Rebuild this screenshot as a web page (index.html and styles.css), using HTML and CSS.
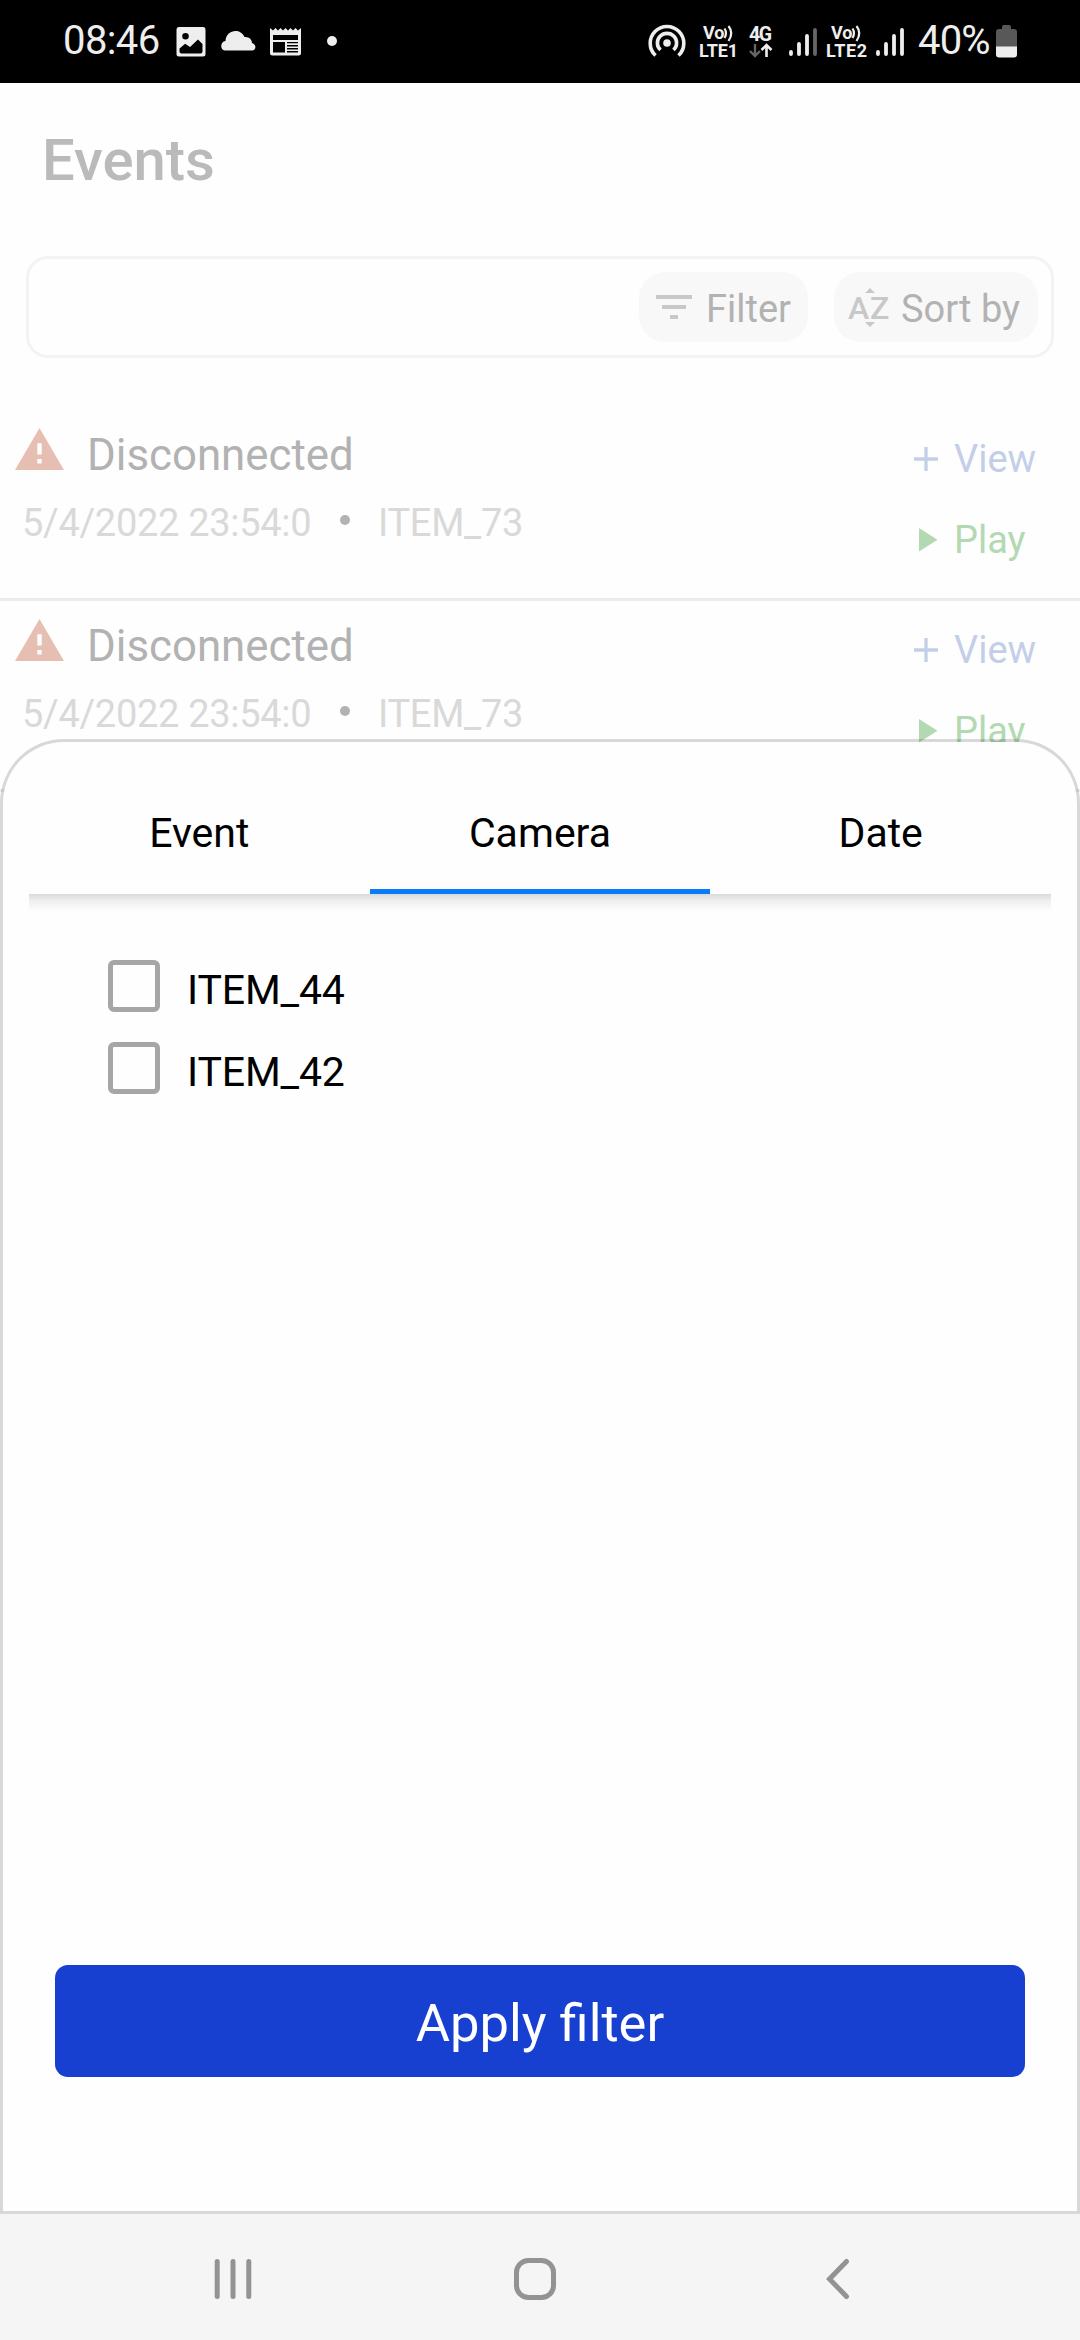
FILE: index.html
```
<!DOCTYPE html>
<html lang="en">
<head>
<meta charset="utf-8">
<title>Events</title>
<link rel="stylesheet" href="styles.css">
</head>
<body>
<div class="screen">
  <header class="status">
    <span class="clock">08:46</span>
    <svg class="s-image" width="30" height="30" viewBox="0 0 30 30"><path fill="#eee" fill-rule="evenodd" d="M3 0H27Q29.500 0 29.500 3V27Q29.500 29.500 27 29.500H3Q.5 29.500 .5 27V3Q.5 0 3 0ZM9.500 6A3.300 3.300 0 1 0 9.500 12.600A3.300 3.300 0 1 0 9.500 6ZM3.500 21.500L9.200 16.700L14 20L22 12.500L26.500 17V24.500Q26.500 26.500 24.500 26.500H5.500Q3.500 26.500 3.500 24.500Z"/></svg>
    <svg class="s-cloud" width="35" height="20" viewBox="0 0 35 20"><path fill="#eee" d="M5 19.500C-1.500 19.500-1 10.500 4.500 10C5-1 19-3.500 23.500 6C28 5.500 31 8.500 31 12C36 13.500 35 19.500 31 19.500Z"/></svg>
    <svg class="s-news" width="31" height="28" viewBox="0 0 31 28"><path fill="#eee" fill-rule="evenodd" d="M0 0L3 2.500L5.500 0L8 2.500L10.500 0L13 2.500L15.500 0L18 2.500L20.500 0L23 2.500L25.500 0L28 2.500L31 0V25Q31 27.500 28.500 27.500H2.500Q0 27.500 0 25ZM3 7V12H28V7ZM3 14V24.500H15V14ZM17 14V15.200H28V14ZM17 17V18.500H28V17ZM17 20V21.500H28V20ZM17 23V24.500H28V23Z"/></svg>
    <span class="s-dot"></span>
    <span class="spacer"></span>
    <svg class="s-hotspot" width="38" height="34" viewBox="0 0 38 34" fill="none" stroke="#eee" stroke-width="3.600"><circle cx="19" cy="19" r="3.800" fill="#eee" stroke="none"/><path d="M12.500 26A9.600 9.600 0 1 1 25.500 26"/><path d="M7.500 31.500A16.800 16.800 0 1 1 30.500 31.500"/></svg>
    <svg class="s-volte" width="42" height="42" viewBox="0 -6 42 42"><g fill="#eee" class="tiny"><text x="4" y="15">Vo</text><text x="0" y="33" textLength="39">LTE1</text></g><path d="M25.500 4.500Q28.500 9 25.500 14M29.500 2Q35 9 29.500 17" fill="none" stroke="#eee" stroke-width="2.200"/></svg>
    <svg class="s-4g" width="26" height="42" viewBox="0 -6 26 42"><text class="tiny net" x="1" y="16.500" fill="#eee" textLength="23">4G</text><path d="M7 20V32M2 27L7 32L12 27" fill="none" stroke="#666" stroke-width="2.400"/><path d="M18.500 33V21M13.500 26L18.500 21L23.500 26" fill="none" stroke="#eee" stroke-width="2.600"/></svg>
    <svg class="s-signal" width="28" height="30" viewBox="0 0 28 30" stroke="#eee" stroke-width="3.800" stroke-linecap="round"><path d="M2 25V27M10 17V27M18 9V27"/><path stroke="#666" d="M26 3V27"/></svg>
    <svg class="s-volte2" width="42" height="42" viewBox="0 -6 42 42"><g fill="#eee" class="tiny"><text x="5" y="15">Vo</text><text x="0" y="33" textLength="41">LTE2</text></g><path d="M26.500 4.500Q29.500 9 26.500 14M30.500 2Q36 9 30.500 17" fill="none" stroke="#eee" stroke-width="2.200"/></svg>
    <svg class="s-signal2" width="28" height="30" viewBox="0 0 28 30" stroke="#eee" stroke-width="3.800" stroke-linecap="round"><path d="M2 25V27M10 17V27M18 9V27M26 3V27"/></svg>
    <span class="percent">40%</span>
    <svg class="s-battery" width="21" height="33" viewBox="0 0 21 33"><path fill="#585858" d="M6 3V2Q6 0 8 0H13Q15 0 15 2V4H18Q21 4 21 7V22H0V7Q0 4 3 4H6Z"/><path fill="#eee" d="M0 21.500H21V29.500Q21 32.500 18 32.500H3Q0 32.500 0 29.500Z"/></svg>
  </header>

  <main class="content">
    <h1 class="title">Events</h1>
    <div class="toolbar">
      <button class="chip chip-filter">
        <svg width="36" height="24" viewBox="0 0 36 24" fill="#c8c8c8"><path d="M0 0H36V4H0ZM6 10H30V14H6ZM14 20H22V24H14Z"/></svg>
        <span>Filter</span>
      </button>
      <button class="chip chip-sort">
        <svg width="42" height="40" viewBox="0 0 42 40" fill="#c8c8c8"><path d="M17 6L22 1L27 6ZM17 35L22 40L27 35Z"/><text class="az" x="0" y="32">A</text><text class="az" x="22" y="32">Z</text></svg>
        <span>Sort by</span>
      </button>
    </div>
    <section class="events">
      <article class="event">
        <div class="info">
          <div class="line-name"><svg width="49" height="42" viewBox="0 0 49 42"><path fill="#e7beb2" fill-rule="evenodd" d="M24.500 0L49 42H0ZM22.300 15.300V26.500H26.700V15.300ZM22.300 31V35.500H26.700V31Z"/></svg><span>Disconnected</span></div>
          <div class="line-meta"><span class="date">5/4/2022 23:54:0</span><i class="bullet"></i><span class="source">ITEM_73</span></div>
        </div>
        <div class="actions">
          <a class="view"><svg width="24" height="24" viewBox="0 0 24 24"><path d="M12 0V24M0 12H24" stroke="#c3cfe8" stroke-width="3.300"/></svg><span>View</span></a>
          <a class="play"><svg width="24" height="24" viewBox="0 0 24 24"><path d="M5 0L23.500 11.800L5 23.500Z" fill="#b3d9b3"/></svg><span>Play</span></a>
        </div>
      </article>
      <article class="event">
        <div class="info">
          <div class="line-name"><svg width="49" height="42" viewBox="0 0 49 42"><path fill="#e7beb2" fill-rule="evenodd" d="M24.500 0L49 42H0ZM22.300 15.300V26.500H26.700V15.300ZM22.300 31V35.500H26.700V31Z"/></svg><span>Disconnected</span></div>
          <div class="line-meta"><span class="date">5/4/2022 23:54:0</span><i class="bullet"></i><span class="source">ITEM_73</span></div>
        </div>
        <div class="actions">
          <a class="view"><svg width="24" height="24" viewBox="0 0 24 24"><path d="M12 0V24M0 12H24" stroke="#c3cfe8" stroke-width="3.300"/></svg><span>View</span></a>
          <a class="play"><svg width="24" height="24" viewBox="0 0 24 24"><path d="M5 0L23.500 11.800L5 23.500Z" fill="#b3d9b3"/></svg><span>Play</span></a>
        </div>
      </article>
    </section>

    <section class="sheet">
      <nav class="tabs">
        <span class="tab">Event</span>
        <span class="tab active">Camera</span>
        <span class="tab">Date</span>
      </nav>
      <div class="tab-shadow"></div>
      <div class="options">
        <label class="option"><i class="box"></i><span>ITEM_44</span></label>
        <label class="option"><i class="box"></i><span>ITEM_42</span></label>
      </div>
      <button class="apply">Apply filter</button>
    </section>
  </main>

  <footer class="navbar">
    <svg width="38" height="42" viewBox="0 0 38 42" stroke="#939393" stroke-width="5" stroke-linecap="round"><path d="M3.200 3.500V38.500M19 3.500V38.500M34.800 3.500V38.500"/></svg>
    <svg class="home" width="42" height="42" viewBox="0 0 42 42"><rect x="2.500" y="2.500" width="37" height="37" rx="12" fill="none" stroke="#939393" stroke-width="5"/></svg>
    <svg width="24" height="42" viewBox="0 0 24 42"><path d="M20.500 3.500L3.500 21L20.500 38.500" fill="none" stroke="#939393" stroke-width="5" stroke-linecap="round"/></svg>
  </footer>
</div>
</body>
</html>
```
FILE: styles.css
```
* { box-sizing: border-box; }
body { margin: 0; font-family: Roboto, sans-serif; background: #fefefe; }
svg { display: block; flex: none; }
button { border: 0; margin: 0; font-family: inherit; }

.screen { width: 1080px; height: 2340px; display: flex; flex-direction: column; overflow: hidden; }

.status { height: 83px; flex: none; background: #000; color: #eee; display: flex; align-items: flex-start; padding: 0 63px 0 63px; }
.clock, .percent { font-size: 40px; line-height: 82px; white-space: nowrap; letter-spacing: -0.6px; }
.clock { width: 98px; }
.percent { width: 72px; margin-left: 14px; letter-spacing: -0.8px; }
.s-image { margin: 27px 0 0 15px; }
.s-cloud { margin: 31px 0 0 15px; }
.s-news { margin: 28px 0 0 14px; }
.s-dot { width: 10px; height: 10px; border-radius: 50%; background: #eee; margin: 36px 0 0 26px; }
.spacer { flex: 1; }
.tiny { font-family: Roboto, sans-serif; font-size: 18px; font-weight: 700; }
.net { font-size: 19.500px; }
.s-hotspot { margin-top: 24px; }
.s-volte { margin: 18px 0 0 13px; }
.s-4g { margin: 18px 0 0 7px; }
.s-signal { margin: 27px 0 0 15px; }
.s-volte2 { margin: 18px 0 0 9px; }
.s-signal2 { margin: 27px 0 0 8px; }
.s-battery { margin: 25px 0 0 6px; }

.content { flex: 1; position: relative; overflow: hidden; }
.title { margin: 0; height: 173px; padding: 42px 0 0 42px; font-size: 58px; line-height: 70px; font-weight: 500; color: #bababa; }

.toolbar { margin: 0 26px; height: 102px; border: 3px solid #f3f3f3; border-radius: 22px; display: flex; justify-content: flex-end; align-items: center; gap: 26px; padding-right: 13px; }
.chip { height: 70px; border-radius: 26px; background: #f8f8f8; color: #b2b2b2; display: flex; align-items: center; font-size: 38px; white-space: nowrap; padding: 0; }
.chip span { line-height: 60px; padding-top: 4px; }
.chip-filter { width: 169px; padding-left: 17px; gap: 14px; }
.chip-sort { width: 204px; padding-left: 14px; gap: 11px; }
.az { font-size: 32px; font-weight: 500; }

.events { margin-top: 52px; }
.event { height: 191px; border-bottom: 3px solid #ebebeb; display: flex; justify-content: space-between; }
.info { padding: 15px 0 0 15px; display: flex; flex-direction: column; gap: 8px; }
.line-name { height: 60px; display: flex; align-items: flex-start; gap: 23px; font-size: 43.800px; line-height: 61px; color: #b2b2b2; }
.line-name svg { margin-top: 3px; }
.line-meta { height: 60px; padding-left: 7px; display: flex; align-items: center; font-size: 38px; line-height: 60px; letter-spacing: -0.3px; color: #d9d9d9; }
.date { width: 318px; }
.bullet { width: 10px; height: 10px; margin: -6px 28px 0 0; border-radius: 50%; background: #b2b2b2; }
.actions { width: 166px; padding-top: 19px; display: flex; flex-direction: column; gap: 21px; font-size: 38px; line-height: 60px; }
.actions a { display: flex; align-items: center; gap: 16px; height: 60px; }
.view { color: #c3cfe8; }
.play { color: #b3d9b3; }

.sheet { position: absolute; left: 0; right: 0; top: 656px; bottom: 0; border: 3px solid rgba(0, 0, 0, 0.15); border-radius: 64px 64px 0 0; background: #fefefe; background-clip: padding-box; display: flex; flex-direction: column; color: #000; }
.tabs { margin: 0 26px; height: 152px; display: grid; grid-template-columns: repeat(3, 1fr); flex: none; }
.tab { text-align: center; padding-top: 61px; font-size: 41px; line-height: 60px; }
.active { border-bottom: 5px solid #087bfb; }
.tab-shadow { margin: 0 26px; height: 18px; flex: none; background: linear-gradient(#d9d9d9, #eeeeee 35%, #fefefe); }
.options { padding: 48px 0 0 105px; display: flex; flex-direction: column; gap: 30px; }
.option { display: flex; align-items: center; gap: 27px; height: 52px; font-size: 41px; line-height: 52px; letter-spacing: -0.15px; }
.option span { padding-top: 8px; }
.box { width: 52px; height: 52px; border: 5px solid #a6a6a6; border-radius: 6px; }
.apply { margin: auto 52px 134px; height: 112px; padding: 3px 0 0; border-radius: 13px; background: #1740d1; color: #fff; font-size: 52.500px; line-height: 80px; }

.navbar { height: 126px; flex: none; background: #f5f5f5; display: flex; align-items: center; padding: 4px 0 0 214px; }
.home { margin: 0 270px 0 262px; }
```
